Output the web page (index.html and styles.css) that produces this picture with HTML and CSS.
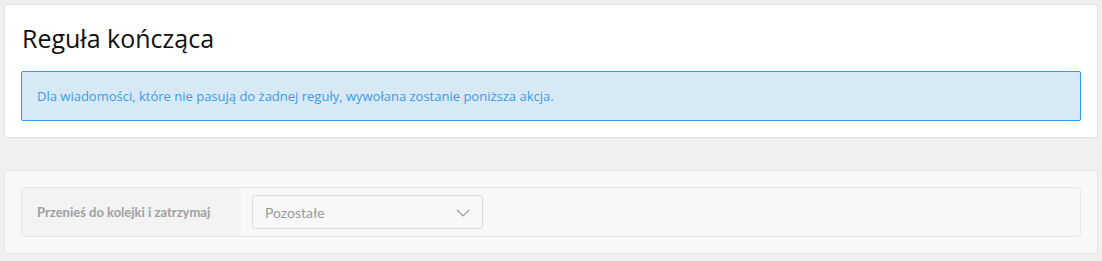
FILE: index.html
```html
<!DOCTYPE html>
<html lang="pl">
  <head>
    <meta charset="UTF-8" />
    <meta name="viewport" content="width=device-width, initial-scale=1.0" />
    <title>Reguła kończąca</title>
    <link rel="stylesheet" href="styles.css">
  </head>
  <body>
    <div class="panel">
      <h2 class="panel-title">Reguła kończąca</h2>
      <div class="alert">
        Dla wiadomości, które nie pasują do żadnej reguły, wywołana zostanie poniższa akcja.
      </div>
    </div>
    <div class="panel panel-muted">
      <div class="rule-row">
        <div class="rule-label">Przenieś do kolejki i zatrzymaj</div>
        <div class="rule-value">
          <div class="select">
            <span>Pozostałe</span>
            <svg class="chevron" width="14" height="8" viewBox="0 0 14 8">
              <path d="M1 1 L7 7 L13 1" fill="none" stroke="#9b9b9b" stroke-width="1.1" />
            </svg>
          </div>
        </div>
      </div>
    </div>
  </body>
</html>
```

FILE: styles.css
```css
body {
  margin: 0;
  padding: 4px 4px;
  background-color: #eff0ef;
  font-family: "Open Sans", "Liberation Sans", sans-serif;
}
.panel {
  background-color: #ffffff;
  border: 1px solid #dedfde;
  border-radius: 3px;
  padding: 16px 16px 16px 16px;
}
.panel-title {
  margin: 0 0 15px 1px;
  font-size: 25px;
  font-weight: 400;
  line-height: 35px;
  color: #111111;
}
.alert {
  background-color: #d8e9f6;
  border: 1px solid #2e9bf0;
  border-radius: 2px;
  padding: 15px 15px;
  font-size: 13px;
  line-height: 18px;
  color: #3b9be8;
}
.panel-muted {
  margin-top: 32px;
  background-color: #f8f8f8;
  border-color: #e4e5e4;
}
.rule-row {
  display: flex;
  align-items: stretch;
  border: 1px solid #e4e5e4;
  border-radius: 4px;
  height: 48px;
  font-family: Lato, "Liberation Sans", sans-serif;
}
.rule-label {
  width: 204px;
  padding-left: 15px;
  display: flex;
  align-items: center;
  background-color: #f2f3f3;
  border-radius: 4px 0 0 4px;
  font-size: 13px;
  font-weight: 700;
  color: #a0a0a0;
}
.rule-value {
  display: flex;
  align-items: center;
  padding-left: 11px;
}
.select {
  box-sizing: border-box;
  width: 231px;
  height: 34px;
  display: flex;
  align-items: center;
  justify-content: space-between;
  padding: 0 12px 0 12px;
  border: 1px solid #dcdcdc;
  border-radius: 3px;
  background-color: #f8f8f8;
  font-size: 14px;
  color: #9a9a9a;
}
.chevron {
  margin-top: 1px;
}
```
